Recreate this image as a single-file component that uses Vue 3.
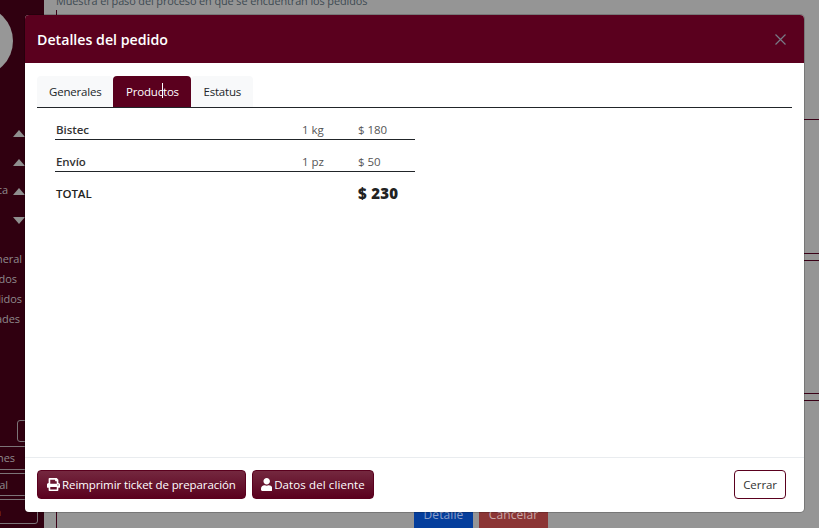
<script setup>
const menu = ['General', 'Pedidos', 'Fallidos', 'Unidades']
const arrows = ['up', 'up', 'up', 'down']
const rows = [
  { name: 'Bistec', qty: '1 kg', price: '$ 180' },
  { name: 'Envío', qty: '1 pz', price: '$ 50' },
]
const tabs = ['Generales', 'Productos', 'Estatus']
</script>

<template>
  <div class="page">
    <aside class="side">
      <div class="avatar"></div>
      <div class="arrows">
        <div v-for="(a, i) in arrows" :key="i" class="arrow-row">
          <span v-if="i === 2" class="arrow-label">Logística</span>
          <span :class="['tri', a]"></span>
        </div>
      </div>
      <ul class="menu">
        <li v-for="m in menu" :key="m">{{ m }}</li>
      </ul>
      <div class="spacer"></div>
      <div class="small-box"></div>
      <div class="side-btn first">Configuraciones</div>
      <div class="side-btn second">Sucursal</div>
      <div class="side-btn third"><span>Cerrar sesión</span></div>
    </aside>

    <main class="main">
      <p class="intro">Muestra el paso del proceso en que se encuentran los pedidos</p>
      <div class="rule"></div>
      <section class="card card-a"><div class="card-line"></div></section>
      <section class="card card-b"></section>
      <section class="card card-c">
        <div class="card-actions">
          <span class="act blue">Detalle</span>
          <span class="act red">Cancelar</span>
        </div>
      </section>
    </main>

    <div class="modal">
      <header class="m-head">
        <h2>Detalles del pedido</h2>
        <svg class="close" viewBox="0 0 11 11" width="11" height="11"><path d="M.5.5l10 10M10.500.5l-10 10" /></svg>
      </header>
      <div class="m-body">
        <nav class="tabs">
          <span v-for="t in tabs" :key="t" :class="['tab', { active: t === 'Productos' }]">
            {{ t }}<i v-if="t === 'Productos'" class="cursor"></i>
          </span>
        </nav>
        <div class="table">
          <div v-for="r in rows" :key="r.name" class="row">
            <strong class="name">{{ r.name }}</strong>
            <span class="qty">{{ r.qty }}</span>
            <span class="price">{{ r.price }}</span>
          </div>
          <div class="row total">
            <strong class="name">TOTAL</strong>
            <span class="qty"></span>
            <strong class="price">$ 230</strong>
          </div>
        </div>
      </div>
      <footer class="m-foot">
        <button class="btn primary ticket">
          <svg viewBox="0 0 512 512" width="13" height="13"><path fill="currentColor" d="M448 192V77.25c0-8.49-3.37-16.62-9.37-22.63L393.37 9.37c-6-6-14.14-9.37-22.63-9.37H96C78.33 0 64 14.33 64 32v160c-35.35 0-64 28.65-64 64v112c0 8.84 7.16 16 16 16h48v96c0 17.67 14.33 32 32 32h320c17.67 0 32-14.33 32-32v-96h48c8.84 0 16-7.16 16-16V256c0-35.35-28.65-64-64-64zm-64 256H128v-96h256v96zm0-224H128V64h192v48c0 8.84 7.16 16 16 16h48v96zm48 72c-13.25 0-24-10.75-24-24 0-13.26 10.75-24 24-24s24 10.74 24 24c0 13.25-10.75 24-24 24z"/></svg>
          Reimprimir ticket de preparación
        </button>
        <button class="btn primary client">
          <svg viewBox="0 0 448 512" width="11.4" height="13"><path fill="currentColor" d="M224 256c70.7 0 128-57.3 128-128S294.7 0 224 0 96 57.3 96 128s57.3 128 128 128zm89.6 32h-16.7c-22.2 10.2-46.9 16-72.9 16s-50.6-5.8-72.9-16h-16.7C60.2 288 0 348.2 0 422.4V464c0 26.5 21.5 48 48 48h352c26.5 0 48-21.5 48-48v-41.6c0-74.2-60.2-134.4-134.4-134.4z"/></svg>
          Datos del cliente
        </button>
        <button class="btn outline">Cerrar</button>
      </footer>
    </div>
  </div>
</template>

<style>
html, body { margin: 0; padding: 0; overflow: hidden; }
</style>

<style scoped>
.page {
  position: relative;
  width: 819px;
  height: 528px;
  display: flex;
  overflow: hidden;
  background: #959595;
  font-family: "Open Sans", "Noto Sans", sans-serif;
  font-size: 11.5px;
  letter-spacing: -0.06px;
  color: #212529;
}

/* sidebar */
.side {
  flex: 0 0 44px;
  width: 44px;
  height: 528px;
  background: #300010;
  display: flex;
  flex-direction: column;
  overflow: hidden;
}
.avatar {
  flex: none;
  width: 70px;
  height: 70px;
  margin: 6px 0 0 -57px;
  border-radius: 50%;
  background: #979797;
}
.arrows {
  margin-top: 54px;
  display: flex;
  flex-direction: column;
  gap: 21px;
}
.arrow-row {
  position: relative;
  height: 8px;
  display: flex;
  justify-content: flex-start;
  padding-left: 13px;
}
.arrow-label {
  position: absolute;
  right: 36px;
  top: -6px;
  color: #8f8a8d;
  font-size: 11px;
  white-space: nowrap;
}
.tri {
  width: 0;
  height: 0;
  border-left: 6px solid transparent;
  border-right: 6px solid transparent;
}
.tri.up { border-bottom: 7px solid #8f8f8f; }
.tri.down { border-top: 7px solid #8f8f8f; }
.menu {
  list-style: none;
  margin: 24px 0 0 -100px;
  width: 144px;
  padding: 0;
  color: #8f8a8d;
  font-size: 11px;
  line-height: 20px;
  white-space: nowrap;
  text-align: right;
}
.menu li:nth-child(1), .menu li:nth-child(3) { padding-right: 22px; }
.menu li:nth-child(2) { padding-right: 27px; }
.menu li:nth-child(4) { padding-right: 24px; }
.spacer { flex: 1; }
.small-box {
  flex: none;
  width: 30px;
  height: 22px;
  margin: 0 0 4px 17px;
  border: 1px solid #7c7478;
  border-radius: 3px;
  box-sizing: border-box;
}
.side-btn {
  flex: none;
  box-sizing: border-box;
  margin-left: -120px;
  width: 170px;
  border: 1px solid #7c7478;
  color: #8f8a8d;
  font-size: 11px;
  white-space: nowrap;
  text-align: right;
}
.side-btn.first { height: 24px; line-height: 22px; padding-right: 34px; }
.side-btn.second { height: 23px; line-height: 21px; margin-top: 3px; padding-right: 41px; }
.side-btn.third {
  height: 25px;
  line-height: 23px;
  margin: 3px 0 4px -120px;
  width: 158px;
  border-radius: 3px;
  color: #a87a20;
  padding-right: 36px;
}

/* background page */
.main {
  flex: 1;
  min-width: 0;
  display: flex;
  flex-direction: column;
  margin-top: -7px;
  padding-left: 12px;
}
.intro {
  margin: 0;
  color: #3d4a52;
  font-size: 10.9px;
  line-height: 15px;
  letter-spacing: -0.1px;
  white-space: nowrap;
}
.rule { height: 1px; background: #787878; margin: 1px 0 0; }
.card {
  flex: none;
  box-sizing: border-box;
  width: 800px;
  border: 1px solid #3a0016;
}
.card-a { height: 244px; margin-top: 1px; border-top: 0; padding-top: 109px; }
.card-line { height: 1px; background: #3a0016; }
.card-b { height: 134px; margin-top: 6px; }
.card-c { height: 140px; margin-top: 6px; }
.card-actions {
  display: flex;
  gap: 6px;
  margin: 102px 0 0 357px;
}
.act {
  display: block;
  height: 30px;
  line-height: 24px;
  font-size: 12px;
  letter-spacing: .1px;
  text-align: center;
}
.act.blue { background: #053e9c; width: 59px; color: #8c9fc8; }
.act.red { background: #8b3535; width: 69px; color: #c9a8a8; }

/* modal */
.modal {
  position: absolute;
  left: 25px;
  top: 15px;
  width: 779px;
  height: 497px;
  background: #fff;
  border-radius: 4px;
  box-shadow: 0 0 0 1px rgba(0,0,0,.2);
  display: flex;
  flex-direction: column;
  overflow: hidden;
}
.m-head {
  flex: none;
  height: 48px;
  background: #5a001e;
  display: flex;
  align-items: center;
  justify-content: space-between;
  padding: 0 18px 0 12px;
}
.m-head h2 {
  margin: 0;
  color: #fff;
  font-size: 14.2px;
  font-weight: 600;
  letter-spacing: 0;
}
.close { stroke: #777a86; stroke-width: 1.2; fill: none; }
.m-body {
  flex: 1;
  padding: 13px 12px 0;
  min-height: 0;
}
.tabs {
  display: flex;
  height: 32px;
  box-sizing: border-box;
  border-bottom: 1px solid #212529;
}
.tab {
  position: relative;
  display: block;
  height: 31px;
  box-sizing: border-box;
  padding: 0 12px;
  line-height: 31px;
  background: #f8f9fa;
  border-radius: 4px 4px 0 0;
  letter-spacing: -0.2px;
  white-space: nowrap;
}
.tab.active { background: #5a001e; color: #fff; min-width: 78px; text-align: center; }
.cursor {
  position: absolute;
  left: 49px;
  top: 7px;
  width: 1px;
  height: 15px;
  background: #fff;
}
.table { margin: 6px 0 0 18px; width: 360px; }
.row {
  display: flex;
  height: 32px;
  box-sizing: border-box;
  border-bottom: 1px solid #212529;
  align-items: flex-end;
  padding-bottom: 1px;
  line-height: 17px;
  color: #555;
}
.row:first-child { height: 26px; }
.row .name { width: 247px; padding-left: 1px; box-sizing: border-box; font-weight: 600; color: #333; }
.row .qty { width: 56px; }
.row .price { width: 57px; }
.row.total { border-bottom: 0; height: 30px; padding-bottom: 0; }
.row.total .name { color: #222; }
.row.total .price { font-size: 15px; font-weight: 800; color: #222; letter-spacing: .3px; }
.m-foot {
  flex: none;
  height: 55px;
  box-sizing: border-box;
  border-top: 1px solid #e9ecef;
  padding: 12px 18px 0 12px;
  display: flex;
  align-items: flex-start;
  gap: 6px;
}
.btn {
  height: 29px;
  box-sizing: border-box;
  border-radius: 4px;
  font-family: inherit;
  font-size: 11.5px;
  letter-spacing: -0.06px;
  padding: 0 9px;
  cursor: pointer;
  white-space: nowrap;
}
.btn.primary {
  display: flex;
  align-items: center;
  gap: 2px;
  color: #fff;
  border: 1px solid #5a001e;
  background: linear-gradient(#74283f, #5a001e);
}
.btn.ticket { letter-spacing: -0.09px; }
.btn.client { letter-spacing: 0.1px; padding: 0 8px; }
.btn.outline {
  margin-left: auto;
  padding: 0 8px;
  background: #fff;
  border: 1px solid #5a001e;
  color: #333;
}
</style>
